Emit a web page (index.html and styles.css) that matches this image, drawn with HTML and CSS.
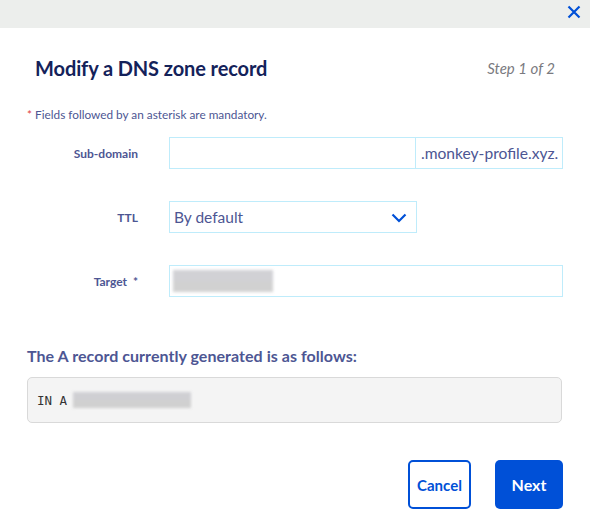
FILE: index.html
```html
<!DOCTYPE html>
<html>
<head>
<meta charset="utf-8">
<link rel="stylesheet" href="styles.css">
</head>
<body>
<div class="modal">
  <div class="topbar">
    <button class="close" aria-label="Close">
      <svg width="14" height="14" viewBox="0 0 14 14"><path d="M1.5 1.5 L12.5 12.5 M12.5 1.5 L1.5 12.5" stroke="#0050d7" stroke-width="2.2" fill="none"/></svg>
    </button>
  </div>
  <div class="header">
    <h1 class="title">Modify a DNS zone record</h1>
    <span class="step">Step 1 of 2</span>
  </div>
  <p class="note"><span class="req">*</span> Fields followed by an asterisk are mandatory.</p>
  <div class="form">
    <label class="label">Sub-domain</label>
    <div class="field group">
      <div class="input grow"></div>
      <div class="suffix">.monkey-profile.xyz.</div>
    </div>
    <label class="label">TTL</label>
    <div class="field">
      <div class="input select">
        <span>By default</span>
        <svg width="16" height="10" viewBox="0 0 16 10"><path d="M1.5 1.5 L8 8 L14.5 1.5" stroke="#0050d7" stroke-width="2.2" fill="none"/></svg>
      </div>
    </div>
    <label class="label">Target &nbsp;*</label>
    <div class="field">
      <div class="input wide"><span class="blur b1"></span></div>
    </div>
  </div>
  <h2 class="subhead">The A record currently generated is as follows:</h2>
  <div class="record"><span class="mono">IN A</span><span class="blur b2"></span></div>
  <div class="actions">
    <button class="btn cancel">Cancel</button>
    <button class="btn next">Next</button>
  </div>
</div>
</body>
</html>
```
FILE: styles.css
```css
* { box-sizing: border-box; }
html, body { margin: 0; padding: 0; background: #fff; }
body { width: 590px; height: 520px; overflow: hidden; font-family: "Lato", "Liberation Sans", sans-serif; color: #4d5693; }
.topbar { height: 28px; background: #eceeec; display: flex; justify-content: flex-end; align-items: center; padding-right: 9px; }
.close { border: 0; background: none; padding: 0; width: 14px; height: 14px; display: flex; margin-top: -4px; }
.header { display: flex; justify-content: space-between; align-items: center; padding: 0 35px 0 35px; margin-top: 26px; height: 28px; }
.title { margin: 0; font-size: 20px; font-weight: 700; color: #14225a; letter-spacing: -0.1px; }
.step { font-size: 15px; font-style: italic; color: #7a7a80; }
.note { margin: 26px 0 0 27px; font-size: 11.8px; line-height: 14px; color: #4d5693; }
.req { color: #e13c3c; }
.form { display: grid; grid-template-columns: 138px 394px; column-gap: 31px; row-gap: 32px; margin-top: 15px; align-items: center; }
.label { text-align: right; font-size: 12px; font-weight: 700; color: #4d5693; }
.field { display: flex; height: 32px; }
.input { height: 32px; border: 1px solid #bfecfb; background: #fff; }
.grow { width: 247px; }
.suffix { width: 147px; height: 32px; border: 1px solid #bfecfb; border-left: 0; font-size: 15.6px; display: flex; align-items: center; padding-left: 5px; color: #4d5693; }
.select { width: 248px; display: flex; align-items: center; justify-content: space-between; padding: 0 9px 0 4px; font-size: 15.5px; color: #4d5693; }
.select svg { margin-top: 2px; }
.wide { width: 394px; display: flex; align-items: center; padding-left: 3px; }
.blur { display: inline-block; background: linear-gradient(#c9c9ce 0 50%, #cacaca 50% 100%); filter: blur(1.5px); opacity: 0.85; }
.b1 { width: 100px; height: 22px; }
.b2 { width: 118px; height: 16px; margin-left: 6px; }
.subhead { margin: 49px 0 0 27px; font-size: 16px; line-height: 20px; font-weight: 700; color: #4d5693; letter-spacing: 0.05px; }
.record { margin: 11px 28px 0 27px; height: 46px; border: 1px solid #d9d9d9; border-radius: 5px; background: #f4f4f4; display: flex; align-items: center; padding: 0 0 0 9px; }
.mono { font-family: "DejaVu Sans Mono", "Liberation Mono", monospace; font-size: 12.5px; color: #333; }
.actions { display: flex; justify-content: flex-end; gap: 24px; padding-right: 27px; margin-top: 37px; }
.btn { height: 49px; border-radius: 5px; font-family: "Lato", "Liberation Sans", sans-serif; font-size: 15px; font-weight: 700; padding: 0; }
.cancel { width: 63px; border: 2px solid #0050d7; background: #fff; color: #0050d7; }
.next { width: 68px; border: 0; background: #0050d7; color: #fff; font-size: 16px; }
```
